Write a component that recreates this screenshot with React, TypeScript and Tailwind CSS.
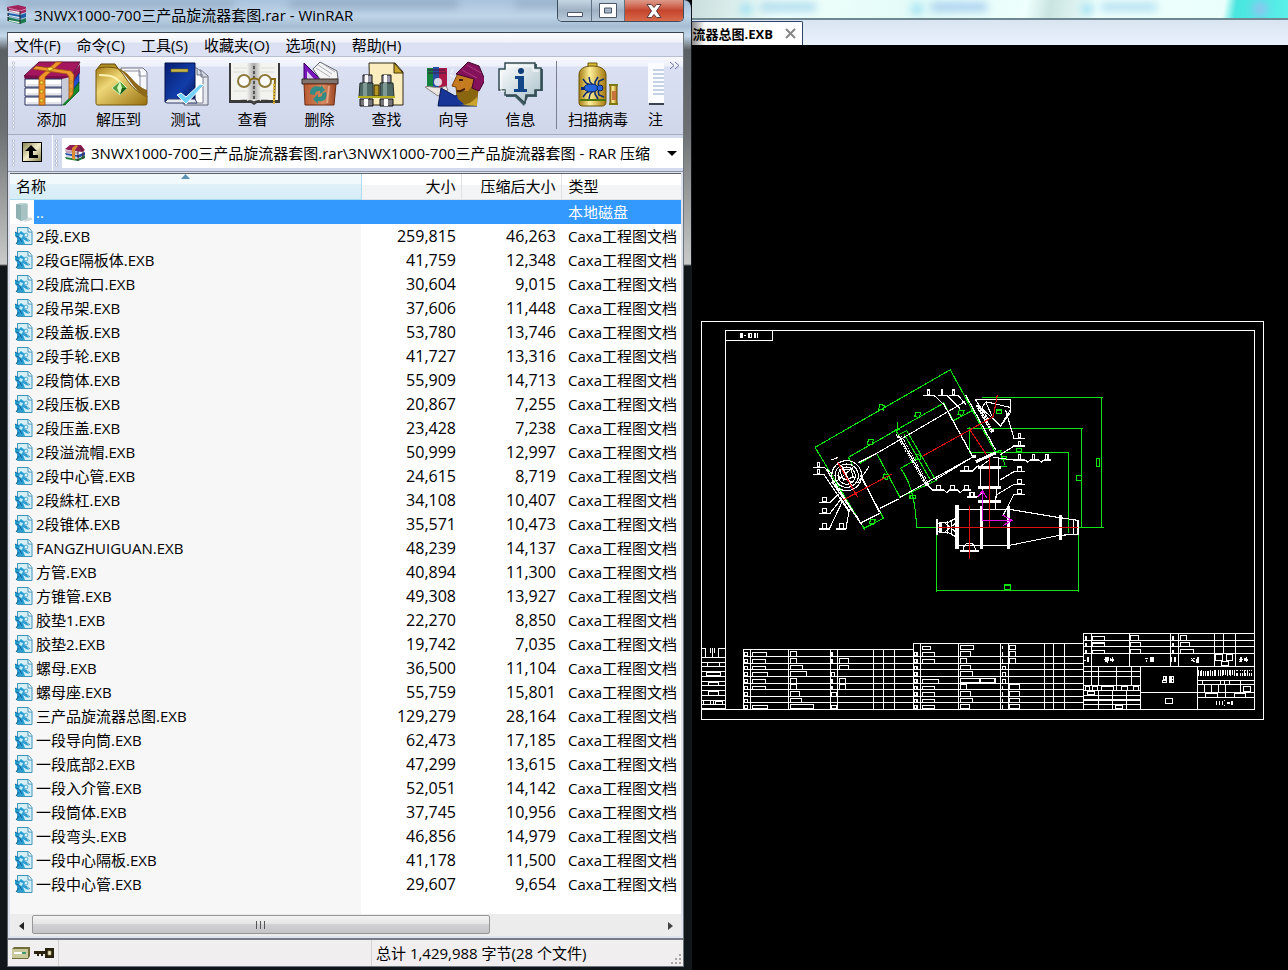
import type { ReactNode } from "react";

type FileRow = [name: string, size: string, packed: string];

const files: FileRow[] = [
  ["2段.EXB", "259,815", "46,263"],
  ["2段GE隔板体.EXB", "41,759", "12,348"],
  ["2段底流口.EXB", "30,604", "9,015"],
  ["2段吊架.EXB", "37,606", "11,448"],
  ["2段盖板.EXB", "53,780", "13,746"],
  ["2段手轮.EXB", "41,727", "13,316"],
  ["2段筒体.EXB", "55,909", "14,713"],
  ["2段压板.EXB", "20,867", "7,255"],
  ["2段压盖.EXB", "23,428", "7,238"],
  ["2段溢流帽.EXB", "50,999", "12,997"],
  ["2段中心管.EXB", "24,615", "8,719"],
  ["2段絑杠.EXB", "34,108", "10,407"],
  ["2段锥体.EXB", "35,571", "10,473"],
  ["FANGZHUIGUAN.EXB", "48,239", "14,137"],
  ["方管.EXB", "40,894", "11,300"],
  ["方锥管.EXB", "49,308", "13,927"],
  ["胶垫1.EXB", "22,270", "8,850"],
  ["胶垫2.EXB", "19,742", "7,035"],
  ["螺母.EXB", "36,500", "11,104"],
  ["螺母座.EXB", "55,759", "15,801"],
  ["三产品旋流器总图.EXB", "129,279", "28,164"],
  ["一段导向筒.EXB", "62,473", "17,185"],
  ["一段底部2.EXB", "47,299", "13,615"],
  ["一段入介管.EXB", "52,051", "14,142"],
  ["一段筒体.EXB", "37,745", "10,956"],
  ["一段弯头.EXB", "46,856", "14,979"],
  ["一段中心隔板.EXB", "41,178", "11,500"],
  ["一段中心管.EXB", "29,607", "9,654"],
];

const menus = ["文件(F)", "命令(C)", "工具(S)", "收藏夹(O)", "选项(N)", "帮助(H)"];

/* ── Icons ── */
function Books({ className }: { className: string }) {
  return (
    <svg viewBox="0 0 20 19" className={className} aria-hidden="true">
      <path d="M0 2 11 0l8 2v5l-6 2-12-3z" fill="#a3245c" />
      <path d="M1 3l12 3 6-2" stroke="#d985ab" fill="none" />
      <path d="M2 5l11 2v2L2 6z" fill="#eee" />
      <path d="M1 8l12 2 6-2v4l-6 2-12-3z" fill="#1d5fa8" />
      <path d="M2 10l11 2v1.500L2 11z" fill="#dde8f2" />
      <path d="M1 12l12 3 6-2v4l-6 2-12-3z" fill="#1c7b53" />
      <path d="M2 15l11 2v1.500L2 16z" fill="#e6f0e8" />
      <path d="M13 6v13M1 3v3M1 8v3M1 12v4" stroke="#222" strokeWidth="1" fill="none" />
    </svg>
  );
}

function BeltBooks({ className }: { className: string }) {
  return (
    <svg viewBox="0 0 20 16" className={className} aria-hidden="true">
      <path d="M0 4l5-4h11l4 5-3 2-14-2z" fill="#8d1d55" />
      <path d="M0 5l13 2v2L1 8z" fill="#c4a5b8" />
      <path d="M0 8l13 2 7-3v3l-7 3L1 10z" fill="#234fae" />
      <path d="M1 10l12 2v1L1 12z" fill="#cdd6ea" />
      <path d="M0 12l13 2 7-4v3l-7 3-12-2z" fill="#1d7a3c" />
      <path d="M7 3l4-3 2 1-3 4v10l-3-1z" fill="#d98a2e" />
      <path d="M13 6v10M15 2l3 4v8" stroke="#4b1f22" fill="none" />
    </svg>
  );
}

function AddIcon() {
  return (
    <>
      <path d="M2 15 17 1h41l-9 15z" fill="#a5165f" stroke="#5d0c38" />
      <path d="m2 15 1 4h38l10-3 7-13-9 12z" fill="#7d0e49" />
      <path d="M49 18 58 3v9l-9 15z" fill="#8c1151" />
      <path d="M48 26 57 12v10l-9 13z" fill="#1d4fd0" stroke="#0a1f66" strokeWidth=".6" />
      <path d="M43 40 57 21v9L43 44h-4z" fill="#158a2c" stroke="#06400f" strokeWidth=".6" />
      <path d="M3 18h37v8H3zM3 27h37v8H3zM3 36h37v8H3z" fill="#fff" stroke="#27305f" strokeWidth="1" />
      <path d="m40 18 8-2v8l-8 2zM40 27l9-5v7l-9 6zM40 36l8-7v7l-8 8z" fill="#c8cad8" />
      <path d="M5 24h34M5 33h34M5 42h34" stroke="#c9cbd8" strokeWidth="1" />
      <path d="M17 16 34 1h6L23 16v28h-6z" fill="#f0942b" stroke="#a14f08" strokeWidth=".8" />
      <path d="M14 5l35 5 3 4-1 19-4 5V16l-2-3L11 8z" fill="#ef9831" stroke="#9b500c" strokeWidth=".8" />
      <path d="m25 7 4-1 3 2-5 2zM18 20h3v3h-3zM18 29h3v3h-3zM18 38h3v3h-3zM48 20h2v2h-2zM48 28h2v2h-2z" fill="#ffe34c" stroke="#8d6508" strokeWidth=".6" />
    </>
  );
}

function ExtractIcon() {
  return (
    <>
      <path d="M8 8l4-5h14l4 6h26v34H9z" fill="#b28e26" stroke="#5d4708" />
      <path d="M32 7h22l4 4v25H34z" fill="#f5f6fb" stroke="#727585" />
      <path d="M35 10h16v24M50 8v7h7" fill="#fff" stroke="#8a8d9c" />
      <path d="M7 9c3-4 14-3 20-2 8 2 12 22 31 28v7c0 2-1 2-3 2H9c-2 0-2-1-2-3z" fill="url(#gold)" stroke="#705609" />
      <path d="M28 7c14 4 16 17 30 22v8C44 30 40 14 28 7z" fill="#8d6819" />
      <path d="M10 14c12 0 16 1 24 10" stroke="#fff4b0" strokeWidth="2" fill="none" />
      <path d="m31 20 7 7-7 7-8-7z" fill="#4d9a3a" stroke="#d9efb8" />
      <path d="m31 20 2 7-2 7-3-7z" fill="#d8f7bc" />
      <path d="m33 27 5 0-7 7z" fill="#185b13" />
    </>
  );
}

function TestIcon() {
  return (
    <>
      <path d="M31 9h14l7 6v29H28z" fill="#e5e7ef" stroke="#5d6272" />
      <path d="M28 7h13l6 6v29H26z" fill="#fff" stroke="#7a7f91" />
      <path d="M41 7v7h6M45 9v7h6" fill="#d7dbe7" stroke="#6b7080" />
      <path d="M9 2h30v39H9z" fill="url(#navy)" stroke="#031048" />
      <path d="m9 41 3-3h27l2 4H11z" fill="#e8ebf4" stroke="#333c66" />
      <path d="M15 8h17v3H15z" fill="#cab84d" stroke="#6b5e13" strokeWidth=".6" />
      <path d="m21 34 9 9 18-19-4-1-14 13-5-4z" fill="#73d3ff" stroke="#fff" />
    </>
  );
}

function ViewIcon() {
  return (
    <>
      <path d="M6 2h51v40H34l-3 2-3-2H6z" fill="#3a3a3a" />
      <path d="M8 2h23v38c-5-2-10-1-23-1zM31 2h24v37c-13 0-18-1-24 1z" fill="#f3f3ef" />
      <path d="M24 2h14v38c-3-2-10-2-14 0z" fill="url(#spine)" />
      <path d="M31 5v37" stroke="#555" strokeWidth="2" strokeDasharray="3 2" />
      <path d="M10 7h14M10 11h12M10 30h14M38 7h14M38 11h13M38 30h14" stroke="#dcdcd8" />
      <circle cx="21" cy="20" r="6" fill="#ffffffaa" stroke="#8d7a3c" strokeWidth="2" />
      <circle cx="42" cy="20" r="6" fill="#ffffffaa" stroke="#8d7a3c" strokeWidth="2" />
      <path d="M27 19c3-2 6-2 9 0M48 18h4l-1 24" stroke="#8a6914" strokeWidth="2" fill="none" />
      <path d="M51 23v20" stroke="#d9b436" strokeDasharray="2 1" strokeWidth="2" />
    </>
  );
}

function DeleteIcon() {
  return (
    <>
      <path d="M14 2 34 22H14z" fill="#7a14bb" stroke="#350064" />
      <path d="M17 10 25 19h-8z" fill="#dcd0ef" />
      <path d="m23 8 7-7 17 9 1 8-16 3z" fill="#f5f5f6" stroke="#65656d" />
      <path d="m28 4 14 9M26 7l14 9M33 3l12 8" stroke="#aeaeb8" />
      <path d="M12 18h36v5H12z" fill="#81766f" stroke="#322823" />
      <path d="M14 23h32l-2 21H15z" fill="url(#copper)" stroke="#6d2c12" />
      <path d="M20 33c0-7 5-9 11-7v-2l4 5-5 4v-3c-4 0-5 1-5 4zM36 31c2 7-2 10-8 9v3l-5-5 5-5v3c3 0 5-1 4-4z" fill="#338b85" />
      <path d="m39 25-2 17" stroke="#e5a381" strokeWidth="2" />
    </>
  );
}

function FindIcon() {
  return (
    <>
      <path d="M12 2h26l8 9v33H13z" fill="#fbedbd" stroke="#312b17" />
      <path d="M37 2v10h9z" fill="#c9a62a" stroke="#413408" />
      <path d="M6 14h9v8H6zM25 14h9v8h-9z" fill="#99a" stroke="#111" />
      <path d="M8 14h3v8H8zM27 14h3v8h-3z" fill="#fff" />
      <path d="M3 22h13v14H2zM23 22h13l1 14H23z" fill="#4e6864" stroke="#222b2a" />
      <path d="M6 22h4v14H6zM26 22h4v14h-4z" fill="#7f9a95" />
      <path d="M17 24h5v11h-5z" fill="#b49422" stroke="#262305" />
      <path d="M1 36h37" stroke="#b5ad20" strokeWidth="2" />
      <path d="M3 38h13v7H3zM23 38h13v7H23z" fill="#77777c" stroke="#111" />
      <path d="M7 38h4v7H7zM27 38h4v7h-4z" fill="#fff" />
    </>
  );
}

function WizardIcon() {
  return (
    <>
      <path d="M3 7h6v19H3z" fill="#14813e" />
      <path d="M9 6h6v20H9z" fill="#274b9f" />
      <path d="M15 7h8v20h-8z" fill="#a91846" />
      <path d="M4 9h17M4 12h18" stroke="#3a1d48" />
      <circle cx="14" cy="21" r="4" fill="#fff" opacity=".8" />
      <path d="M1 26c5-2 12 3 21-1l2 4-10 6z" fill="#ece6e3" stroke="#8b807c" />
      <path d="M14 45l3-18 14 8 8-3 14 13z" fill="#173596" stroke="#091853" />
      <path d="M34 12c-2 5-4 8-6 13l4 1 1 8 12 3 9-13-7-13z" fill="#c57b20" stroke="#774008" />
      <path d="M32 30l12 0 8-10 3 3-2 21H41l-7-6z" fill="#8a6510" />
      <path d="M36 44c8 0 12-3 17-8v9z" fill="#c9a52c" />
      <path d="M32 13 44 1l11 4 6 14-6 11-7-3 2-9z" fill="#84125b" stroke="#43052d" />
      <path d="m38 9 15 8M43 4l14 8" stroke="#ad397f" />
      <path d="M33 30c5 1 6-2 8-2M35 19h4" stroke="#432009" strokeWidth="2" />
      <path d="m26 14 4 2M29 8l-2 4" stroke="#fff" />
    </>
  );
}

function InfoIcon() {
  return (
    <>
      <path d="M15 3h31v5h6v22h-6v6H37l-4 9-9-9h-9v-6H9V9h6z" fill="#405e65" />
      <path d="M14 2h30v5h6v22h-6v5H35l-1 8-9-8H14v-5H8V8h6z" fill="url(#silver)" stroke="#334b51" strokeWidth="1.500" />
      <path d="M15 5h27v5h6M14 30h-4V10" stroke="#fff" fill="none" />
      <circle cx="30" cy="10" r="3" fill="#123c79" />
      <path d="M24 15h9v13h3v3H23v-3h4V18h-3z" fill="#134687" />
    </>
  );
}

function ScanIcon() {
  return (
    <>
      <path d="M20 2h9v5h-9z" fill="#d9ba33" stroke="#6b570b" />
      <path d="M11 14c0-6 5-9 13-9s14 3 14 9v27c0 3-2 4-4 4H15c-3 0-4-1-4-4z" fill="url(#barrel)" stroke="#69550b" />
      <path d="M12 39h26" stroke="#4f750d" strokeWidth="2" />
      <path d="m15 18 3 4 4 2M21 16l1 5 3 3M30 16l-3 5v3M36 18l-5 2-1 4M15 36l3-4 4-2M21 38l1-5 3-3M30 38l-3-5v-3M36 36l-5-2-1-4" stroke="#0b2a70" fill="none" strokeWidth="1.500" />
      <path d="M13 26h5v3h-5z" fill="#0b2a70" />
      <ellipse cx="23" cy="27" rx="7" ry="4" fill="#2565dc" stroke="#072160" />
      <circle cx="32" cy="27" r="3" fill="#2565dc" stroke="#072160" />
      <path d="M42 24h7v19h-7z" fill="url(#barrel)" stroke="#69550b" />
      <path d="M41 24h9M41 43h9" stroke="#7b7913" strokeWidth="2" />
      <path d="M44 30h4v9h-4z" fill="#c9743f" />
    </>
  );
}

function FileIcon() {
  return (
    <svg viewBox="0 0 18 18" className="h-[18px] w-[18px]" aria-hidden="true">
      <path d="M2.500.500h11l3.500 4v13H2.500z" fill="#d5f0fa" stroke="#3f91b8" />
      <path d="M13 1v4h4" fill="#fff" stroke="#3f91b8" />
      <path d="M0 5l4 1 2-2 4 3-1 2 3 3 2 3-3-1-3-2 2 5H1l2-5-3-3z" fill="#2a9fd4" />
      <path d="M0 5l3 2M1 9l3 1 3 5M1 17l3-4" stroke="#135f92" fill="none" />
      <path d="M5 7l3 1-1 3-3-1z" fill="#bdeafa" />
      <circle cx="11" cy="8" r="2" fill="none" stroke="#58a9cc" />
      <path d="M11 11l4 3" stroke="#3b8fb9" />
    </svg>
  );
}

function IconDefs() {
  return (
    <svg className="absolute h-0 w-0" aria-hidden="true">
      <defs>
        <linearGradient id="gold" x2="1" y2="1">
          <stop stopColor="#a97f16" />
          <stop offset=".35" stopColor="#eed778" />
          <stop offset="1" stopColor="#98700d" />
        </linearGradient>
        <linearGradient id="navy" x2="1" y2="1">
          <stop stopColor="#061e72" />
          <stop offset=".6" stopColor="#123eaa" />
          <stop offset="1" stopColor="#041452" />
        </linearGradient>
        <linearGradient id="spine">
          <stop stopColor="#f1f1ee" />
          <stop offset=".5" stopColor="#aaa" />
          <stop offset="1" stopColor="#f1f1ee" />
        </linearGradient>
        <linearGradient id="copper">
          <stop stopColor="#b75a32" />
          <stop offset=".6" stopColor="#d68a61" />
          <stop offset="1" stopColor="#9b4421" />
        </linearGradient>
        <linearGradient id="silver" x2="1" y2="1">
          <stop stopColor="#fff" />
          <stop offset="1" stopColor="#a7bfc9" />
        </linearGradient>
        <linearGradient id="barrel">
          <stop stopColor="#a47c12" />
          <stop offset=".4" stopColor="#fff099" />
          <stop offset="1" stopColor="#a5770b" />
        </linearGradient>
      </defs>
    </svg>
  );
}

const tools: { label: string; icon: ReactNode }[] = [
  { label: "添加", icon: <AddIcon /> },
  { label: "解压到", icon: <ExtractIcon /> },
  { label: "测试", icon: <TestIcon /> },
  { label: "查看", icon: <ViewIcon /> },
  { label: "删除", icon: <DeleteIcon /> },
  { label: "查找", icon: <FindIcon /> },
  { label: "向导", icon: <WizardIcon /> },
  { label: "信息", icon: <InfoIcon /> },
];

function ToolButton({ label, children, wide }: { label: string; children: ReactNode; wide?: boolean }) {
  return (
    <button type="button" className={`flex shrink-0 flex-col items-center ${wide ? "w-20" : "w-[67px]"}`}>
      <svg viewBox="0 0 60 46" className="h-[46px] w-[60px]" aria-hidden="true">
        {children}
      </svg>
      <span className="leading-6">{label}</span>
    </button>
  );
}

function Grip() {
  return (
    <div className="my-1 w-[3px] shrink-0 bg-[radial-gradient(circle,#ffffff_1px,#b4bace_1px,transparent_2px)] bg-[length:3px_4px]" />
  );
}

/* ── Window parts ── */
function TitleBar() {
  return (
    <header className="relative flex h-8 items-start justify-between">
      {/* what shows through the glass */}
      <div className="absolute inset-x-0 top-0 flex h-3 justify-between opacity-50 blur-xs" aria-hidden="true">
        <i className="h-2 w-1/3 bg-[#8199b1]" />
        <i className="h-2 w-1/4 bg-[#7690aa]" />
        <i className="h-2 w-1/4 bg-[#8199b1]" />
      </div>
      <div className="relative flex min-w-0 items-center gap-[7px] pt-1">
        <Books className="h-[21px] w-5 shrink-0" />
        <h1 className="truncate leading-5">3NWX1000-700三产品旋流器套图.rar - WinRAR</h1>
      </div>
      <div className="relative flex h-[22px] shrink-0 overflow-hidden rounded-b-[5px] border border-t-0 border-[#3e4c5c]">
        <button type="button" aria-label="最小化" className="flex w-[34px] items-end justify-center border-r border-[#5f7184] bg-linear-to-b from-[#c5d5e3] via-[#9fb2c4] to-[#b9cbdb] pb-1">
          <svg viewBox="0 0 16 5" className="h-[5px] w-4" aria-hidden="true">
            <path d="M.5.500h15v4H.5z" fill="#fff" stroke="#4c5867" />
          </svg>
        </button>
        <button type="button" aria-label="最大化" className="flex w-[33px] items-center justify-center border-r border-[#5f7184] bg-linear-to-b from-[#c5d5e3] via-[#9fb2c4] to-[#b9cbdb]">
          <svg viewBox="0 0 18 15" className="h-[15px] w-[18px]" aria-hidden="true">
            <path d="M.5.500h17v14H.5zM5.500 5h7v5h-7z" fill="#fff" fillRule="evenodd" stroke="#4c5867" />
          </svg>
        </button>
        <button type="button" aria-label="关闭" className="flex w-[58px] items-center justify-center bg-linear-to-b from-[#dd9a8b] via-[#c4442c] to-[#d9694b]">
          <svg viewBox="0 0 16 14" className="h-[14px] w-4" aria-hidden="true">
            <path d="M1 .5h4.500L8 3.500l2.500-3H15L10.500 7l4.500 6.500h-4.500L8 10.500l-2.500 3H1L5.500 7z" fill="#fff" stroke="#5b3a3e" />
          </svg>
        </button>
      </div>
    </header>
  );
}

function Toolbar() {
  return (
    <div className="flex h-[78px] border-b border-[#a3abc0] bg-[linear-gradient(#f8f9fe_0px,#eef1fb_9px,#dbe1f3_10px,#cfd6ea_100%)] pl-1">
      <Grip />
      <div className="flex min-w-0 flex-1 overflow-hidden pt-1 pl-[3px]">
        {tools.map((t) => (
          <ToolButton key={t.label} label={t.label}>
            {t.icon}
          </ToolButton>
        ))}
        <div className="mr-px ml-[2px] h-[68px] w-px shrink-0 bg-[#7a8090]" />
        <ToolButton label="扫描病毒" wide>
          <ScanIcon />
        </ToolButton>
        <button type="button" aria-label="注释" className="ml-[10px] flex min-w-0 flex-1 flex-col items-start overflow-hidden">
          <svg viewBox="0 0 16 46" className="h-[46px] w-4 shrink-0" aria-hidden="true">
            <path d="M0 2h16v40H0z" fill="#fbfcff" />
            <path d="M1 43h15" stroke="#3d4250" strokeWidth="2" />
            <path d="M5 9h11M5 13h11M5 17h11M5 21h11M5 25h11M5 29h11M5 33h11" stroke="#8fa6c9" />
          </svg>
          <span className="leading-6">注</span>
        </button>
      </div>
      <button type="button" aria-label="更多" className="flex w-[18px] shrink-0 items-start justify-center pt-1">
        <svg viewBox="0 0 11 9" className="h-[9px] w-[11px]" fill="none" stroke="#6f74a5" aria-hidden="true">
          <path d="m1 1 4 3.500L1 8M6 1l4 3.500L6 8" />
        </svg>
      </button>
    </div>
  );
}

function AddressBar() {
  return (
    <div className="flex h-[37px] border-b border-[#8d94a6] bg-[#d5dbee] pl-1">
      <Grip />
      <button type="button" aria-label="上一级" className="mt-[7px] ml-[7px] h-5 w-5 shrink-0 border border-black bg-linear-to-br from-[#8a8550] via-[#f2eecb] to-[#8a8550]">
        <svg viewBox="0 0 18 18" aria-hidden="true">
          <path d="m8 2 6 6h-4v4h5v3H6V8H2z" fill="#000" />
        </svg>
      </button>
      <div className="ml-2.5 w-px shrink-0 bg-white" />
      <div className="ml-[2px] flex">
        <Grip />
      </div>
      <label className="my-[3px] ml-1 flex min-w-0 flex-1 items-center bg-white pl-[3px]">
        <BeltBooks className="h-4 w-5 shrink-0" />
        <select aria-label="地址" className="ml-[6px] min-w-0 flex-1 appearance-none overflow-hidden bg-transparent whitespace-nowrap outline-none">
          <option>3NWX1000-700三产品旋流器套图.rar\3NWX1000-700三产品旋流器套图 - RAR 压缩</option>
        </select>
        <svg viewBox="0 0 10 5" className="mr-1.5 ml-2 h-[5px] w-2.5 shrink-0" aria-hidden="true">
          <path d="M0 0h10L5 5z" />
        </svg>
      </label>
    </div>
  );
}

function FileTable() {
  return (
    <table className="w-full table-fixed border-collapse">
      <colgroup>
        <col />
        <col className="w-[100px]" />
        <col className="w-[100px]" />
        <col className="w-[120px]" />
      </colgroup>
      <thead>
        <tr className="h-[25px] bg-[linear-gradient(#fff_45%,#f3f4f5_45%)] text-right">
          <th className="relative border-r border-b border-[#a9dcec] bg-[linear-gradient(#f2f9fd_40%,#dff0f8_42%,#d6edf7)] p-0 pl-1.5 text-left font-normal">
            名称
            <svg viewBox="0 0 9 5" className="absolute inset-x-0 top-0 mx-auto h-[5px] w-[9px]" aria-hidden="true">
              <path d="M0 5 4.500 0 9 5z" fill="#5c93b5" />
            </svg>
          </th>
          <th className="border-r border-b border-[#e0e3e6] p-0 pr-[5px] font-normal">大小</th>
          <th className="border-r border-b border-[#e0e3e6] p-0 pr-[5px] font-normal">压缩后大小</th>
          <th className="border-b border-[#e0e3e6] p-0 pl-[7px] text-left font-normal">类型</th>
        </tr>
      </thead>
      <tbody>
        <tr className="h-6 bg-[#3399ff] text-white">
          <td className="p-0">
            <div className="flex h-6 leading-6">
              <span className="flex w-6 items-center bg-white pl-[5px]">
                <svg viewBox="0 0 18 20" className="h-5 w-[18px]" aria-hidden="true">
                  <path d="M11 15l6 1v2l-8 2z" fill="#d3d8d9" />
                  <path d="M1 2l5-1h5l2 1v15l-6 2-6-3z" fill="#bfd3d3" />
                  <path d="M1 2l5 1v16l-5-3z" fill="#8fb0b1" />
                  <path d="M6 3l6-1v15l-6 2z" fill="#a6c2c3" />
                </svg>
              </span>
              <span className="pl-[2px]">..</span>
            </div>
          </td>
          <td />
          <td />
          <td className="p-0 pl-[7px]">本地磁盘</td>
        </tr>
        {files.map(([name, size, packed]) => (
          <tr key={name} className="h-6 leading-6 whitespace-nowrap">
            <td className="overflow-hidden p-0">
              <div className="flex h-6">
                <span className="flex w-6 shrink-0 items-center pl-[5px]">
                  <FileIcon />
                </span>
                <span className="truncate pl-[2px]">{name}</span>
              </div>
            </td>
            <td className="p-0 pr-[5px] text-right text-base leading-6">{size}</td>
            <td className="p-0 pr-[5px] text-right text-base leading-6">{packed}</td>
            <td className="overflow-hidden p-0 pl-[7px]">Caxa工程图文档</td>
          </tr>
        ))}
      </tbody>
    </table>
  );
}

function ScrollBar() {
  return (
    <div className="flex h-[22px] bg-[#ececed] pt-px">
      <button type="button" aria-label="向左滚动" className="flex w-[22px] items-center justify-center">
        <svg viewBox="0 0 5 8" className="h-2 w-[5px]" aria-hidden="true">
          <path d="M5 0v8L0 4z" fill="#222" />
        </svg>
      </button>
      <div className="flex-1">
        <div className="flex h-[19px] w-[73%] items-center justify-center gap-[3px] rounded-xs border border-[#979797] bg-[linear-gradient(#f3f3f3,#e5e5e6_45%,#d2d2d4_50%,#c4c4c6)]">
          <i className="h-2 w-px bg-[#555]" />
          <i className="h-2 w-px bg-[#555]" />
          <i className="h-2 w-px bg-[#555]" />
        </div>
      </div>
      <button type="button" aria-label="向右滚动" className="flex w-[22px] items-center justify-center">
        <svg viewBox="0 0 5 8" className="h-2 w-[5px]" aria-hidden="true">
          <path d="M0 0v8l5-4z" fill="#444" />
        </svg>
      </button>
    </div>
  );
}

function StatusBar() {
  return (
    <footer className="flex h-[26px] items-stretch bg-[#f0eeee]">
      <div className="flex w-[51px] items-center gap-[3px] border-r border-[#d7d2d2] pl-[3px]">
        <svg viewBox="0 0 20 12" className="h-3 w-5" aria-hidden="true">
          <path d="M1 2l2-2h16v9l-2 3H1z" fill="#716d3b" />
          <path d="M1 2h16v9H1z" fill="#c9c99c" />
          <path d="M3 6h12" stroke="#fff" strokeWidth="2" />
          <path d="M11 6h4" stroke="#3f9a72" strokeWidth="2" />
        </svg>
        <svg viewBox="0 0 20 12" className="h-3 w-5" aria-hidden="true">
          <path d="M0 4h11V1h9v10h-9V7H9v2H7V7H5v2H3V7H0z" fill="#29220e" />
          <path d="M14 4h3v4h-3z" fill="#f0ecc8" stroke="#a59961" strokeWidth=".7" />
        </svg>
      </div>
      <div className="flex-1" />
      <div className="flex w-[312px] items-end justify-between border-l border-[#d7d2d2] pl-1">
        <span className="self-center">总计 1,429,988 字节(28 个文件)</span>
        <svg viewBox="0 0 12 12" className="h-3 w-3" fill="#aaa6a6" aria-hidden="true">
          <path d="M8 0h2v2H8zM8 4h2v2H8zM8 8h2v2H8zM4 4h2v2H4zM4 8h2v2H4zM0 8h2v2H0z" />
        </svg>
      </div>
    </footer>
  );
}

function WinRar() {
  return (
    <section className="flex min-w-0 flex-col rounded-tr-lg border-r border-[#15191e] bg-[linear-gradient(#a9c3dc_0px,#c0d5e9_16px,#a5bdd2_26px,#c3d8ea_36px,#5b6064_50px,#6d7072_130px,#c9cac9_264px,#11161b_266px)] pr-[7px] pb-[3px] pl-[7px]">
      <TitleBar />
      <div className="flex flex-1 flex-col border border-t-[#39434f] border-r-[#6f757c] border-b-[#6f757c] border-l-[#5c6168] bg-[#dfe3ef]">
        <nav className="flex h-6 items-center gap-4 border-b border-[#b8bfd0] bg-[linear-gradient(#fdfdff_0px,#f1f3fb_9px,#dbe1f2_10px,#dce2f3_100%)] pl-1.5">
          {menus.map((m) => (
            <button type="button" key={m} className="whitespace-nowrap">
              {m}
            </button>
          ))}
        </nav>
        <Toolbar />
        <AddressBar />
        <main className="mx-[2px] mt-px flex flex-1 flex-col border-t border-[#5f6368] bg-[linear-gradient(to_left,#fff_320px,#f7f7f7_320px)]">
          <FileTable />
          <div className="min-h-4 flex-1" />
          <ScrollBar />
        </main>
        <div className="mt-[2px] h-[2px] bg-[#777c86]" />
        <StatusBar />
      </div>
    </section>
  );
}

/* ── Drawing ── */
const RULE_YS = [118, 139, 160, 178, 199, 220, 238, 259, 277];

// small field boxes in the parts list: x, y, width, height
const FIELDS_LEFT = [
  [172, 127, 43, 12], [172, 148, 40, 12], [172, 169, 40, 9], [172, 187, 46, 12], [172, 208, 40, 12], [172, 229, 40, 9], [172, 286, 46, 11],
  [286, 124, 19, 15], [286, 145, 19, 15], [286, 166, 37, 12], [286, 184, 49, 15], [286, 205, 19, 15], [286, 223, 19, 15], [286, 244, 28, 15], [286, 265, 34, 12], [286, 283, 70, 14],
  [433, 145, 28, 15], [433, 166, 28, 12], [433, 205, 19, 15], [433, 223, 19, 15],
  [682, 109, 25, 9], [682, 127, 37, 12], [682, 148, 37, 12], [682, 208, 49, 12], [682, 229, 37, 9], [682, 247, 37, 12], [682, 268, 37, 9], [682, 286, 37, 11],
  [796, 106, 40, 12], [796, 124, 31, 15], [796, 145, 19, 15], [796, 166, 31, 12], [796, 184, 37, 15], [796, 205, 104, 14], [796, 223, 19, 15], [796, 244, 31, 15], [796, 265, 37, 12], [796, 283, 28, 14],
  [855, 205, 44, 14], [943, 106, 19, 12], [943, 124, 19, 15], [943, 145, 19, 15], [943, 223, 31, 15], [943, 244, 31, 15], [943, 265, 31, 12], [943, 283, 31, 14],
  [922, 169, 10, 9], [922, 187, 10, 12], [922, 208, 10, 12], [410, 187, 9, 12], [410, 247, 15, 12], [410, 286, 15, 11],
  [34, 187, 43, 9], [40, 217, 31, 9], [40, 244, 31, 12], [62, 274, 21, 9],
];
const FIELDS_RIGHT = [
  [336, 79, 38, 13], [336, 99, 38, 11], [336, 121, 38, 9], [451, 76, 25, 16], [451, 97, 31, 13], [451, 118, 31, 12],
  [601, 76, 19, 16], [601, 97, 28, 13], [601, 118, 40, 12],
  [706, 133, 22, 18], [739, 133, 19, 18], [724, 154, 22, 12],
  [316, 229, 13, 12], [337, 229, 16, 12], [364, 229, 37, 12], [424, 229, 19, 12], [460, 229, 16, 12],
  [322, 244, 22, 11], [406, 286, 22, 11], [556, 265, 22, 16],
  [790, 229, 22, 16], [676, 250, 36, 12], [763, 250, 34, 12],
];

function Fields({ boxes }: { boxes: number[][] }) {
  return <path d={boxes.map(([x, y, w, h]) => `M${x} ${y}h${w}v${h}h-${w}z`).join("")} />;
}

function CadDrawing() {
  const rowBoxes = RULE_YS.map((y) => [148, y + 9, 9, 10]).concat(RULE_YS.map((y) => [658, y + 9, 8, 10]));
  return (
    <svg viewBox="692 45 596 925" className="min-h-0 w-full flex-1" role="img" aria-label="三产品旋流器总图" fill="none" strokeWidth="3.300" shapeRendering="crispEdges">
      <g stroke="#fff" strokeWidth="1">
        <path d="M701.500 321.500h562v398h-562zM725.500 330.500h529v379h-529zM725.500 340.500h47v-10" />
        <path d="M740 335h3M748 335h2M754 335h2M757 335h1" strokeWidth="5" />
        <path d="M744 335h2M748 333h3v4h-3" />
      </g>

      {/* parts list, left half */}
      <g transform="translate(695 610) scale(.3333)" stroke="#fff">
        <path d="M145 118h510M655 100h510M145 139h1020M145 160h1020M145 178h1020M145 199h1020M145 220h1020M145 238h1020M145 259h1020M145 277h1020" />
        <path d="M145 118v179M166 118v179M280 118v179M407 118v179M427 118v179M535 118v179M565 118v179M598 118v179" />
        <path d="M655 100v197M677 100v197M790 100v197M917 100v197M941 100v197M1048 100v197M1075 100v197M1108 100v197" />
        <path d="M19 142h72M19 157h72M19 169h72M19 184h72M19 199h72M19 214h72M19 226h72M19 241h72M19 256h72M19 271h72M19 283h72M19 297h72M19 115h13v27M70 142v-27h21M46 115v14M52 115v27M58 115v14M37 157v12M73 157v12M25 271v12M46 271v12M55 271v12" />
        <path d="M411 125v12M411 146v12M411 206v12M411 227v10" strokeWidth="6" />
        <path d="M922 109v8M922 127v10M922 148v10M922 229v8M922 247v10M922 268v8M922 286v10" />
        <Fields boxes={FIELDS_LEFT} />
        <Fields boxes={rowBoxes} />
      </g>

      {/* title block */}
      <g transform="translate(980 610) scale(.3333)" stroke="#fff">
        <path d="M310 297V71h513M310 92h513M310 110h513M310 130h513M310 169h513M334 71v98M448 71v98M572 71v98M595 71v98M703 71v98M730 71v61M766 71v98" />
        <path d="M310 184h171M310 199h171M310 226h171M310 241h171M310 256h171M310 270h171M310 283h171M334 169v57M355 169v57M410 169v72M454 169v57M355 241v56M397 241v56M439 241v56" />
        <path d="M481 169v128M652 169v128M481 247h342M652 211h171M652 223h171M652 262h171M667 211v12M721 211v12M733 211v12M748 211v12M781 211v12M673 223v24M694 223v24M715 223v24M736 223v39M781 223v24" />
        <path d="M318 78v11M318 99v9M318 120v8M578 78v11M578 99v9M578 120v8" strokeWidth="6" />
        {/* column captions, too small to resolve */}
        <path d="M312 151h6M324 142v14M376 142v14M376 144h8v6h-8l8 7M391 150h10M397 142v14M392 144v10M496 146h9M500 150v6M512 142h8v12h-8zM516 142v14M575 142v14M585 142v14M581 148h7M633 144l10 12M643 144l-10 8M648 150h10M654 142v14M649 156h8M778 148h10M783 142v14M778 155h9M795 144v6h8M799 142v14" />
        <path d="M550 200h8v8h-8zM547 211h13v6h-13zM570 200h10v18h-10zM575 200v18M570 209h10" />
        <path d="M653 189h164" strokeWidth="18" strokeDasharray="3 3 6 4 3 3" />
        <path d="M656 181h50M730 196h30M768 186h49" stroke="#000" strokeDasharray="8 5" />
        <path d="M709 272v14M718 272v14M727 272v14M731 272h4M731 286h4M756 272v14M740 279h9" />
        <Fields boxes={FIELDS_RIGHT} />
      </g>

      {/* assembly */}
      <g transform="translate(800 360) scale(.3333)">
        <g stroke="#10e410">
          <path d="M45 262 450 30M45 262 195 510M450 28 585 275M145 292 430 130M145 292l12 22M430 127l30 55 60-32M285 207l14 24M293 185v27M275 215l26-8M295 225l25-13 88 150-28 13M312 222l84 146M180 310l50-30 70 132 108-50M302 325l43-25M302 325c35 50 44 105 48 177h58M192 505l58-30-10-20" />
          <path d="M409 478v219M835 520v177M409 691h426M547 112h363M905 112v390M835 502h76M502 205h348M844 205v297M508 200v77h297v243M575 280l30-10M600 270l15 45M592 320h30" />
          <path d="M240 134l14 2-4 14-14-2zM348 156l14 2-4 14-14-2zM206 238l14 2-4 14-14-2zM478 150l14 2-4 14-14-2zM350 284l14 2-4 14-14-2zM252 342l14 2-4 14-14-2zM212 477l14 2-4 14-14-2zM590 150h15v10h-15zM649 265h15v10h-15zM605 289h15v10h-15zM330 406h16v10h-16zM829 346h15v15h-15zM889 295h10v24h-10zM613 675h18v13h-18z" />
        </g>
        <g stroke="#fff">
          {/* inclined cylinder */}
          <path d="M175 308l55-28M230 280l265-155M240 445l55-28M300 412l220-122M405 360l115-70M180 490l60-30M80 330l105 165M180 345l62 115" />
          <path d="M295 225 382 375M430 130l88 160M497 105l90 165M183 345l55 112M95 365l90 128" strokeWidth="4" />
          <path d="M532 135l45 82" strokeWidth="10" strokeDasharray="6 2" />
          <path d="M105 375l80 115M288 222l88 152M304 228l84 148" strokeDasharray="5 3" />
          <path d="M515 289h12M528 305l60-27M572 213h10M374 373h12" strokeWidth="9" />
          <path d="M118 410l30 45" strokeWidth="6" />
          {/* end flange */}
          <circle cx="140" cy="347" r="45" />
          <circle cx="140" cy="347" r="35" />
          <circle cx="140" cy="347" r="26" />
          <path d="M118 330l12 30 30-8-8-25zM112 362l48-40M125 318l30 60M115 350l40 15M172 370l35-50M95 300l20-8" />
          {/* elbow */}
          <path d="M525 118h107v38l-30 42-22-22M632 118v30M557 125l72 17M557 125l-14 24M557 125l22 50M545 145l57 52M632 148l-30 50M527 120l40 60" />
          {/* vertical pipe */}
          <path d="M542 322v60M596 322v60M547 382v60M590 382l-4 60M568 300l-30 22M596 290v30" />
          <path d="M534 322h68M534 382h68M534 424h68" strokeWidth="9" />
          {/* horizontal body */}
          <path d="M472 448h155l152 25 55 8v42l-55 3-150 30H472zM820 481v42M586 424v24M415 490l30-3 22-12M415 515l30 3 22 12M425 487v30M442 484v38M455 482v40M490 570c0-28 36-28 36 0" />
          <path d="M466 438h10v128h-10z" />
          <path d="M412 478v48M420 485v34M471 440v125M480 573h56" strokeWidth="6" />
          <path d="M545 438v128M625 438v128M782 465v75" strokeWidth="9" />
          <path d="M436 490l30 25M436 515l30-25" />
          {/* callouts */}
          <path d="M370 106h32l30 28M414 106h26l40 40M448 106h26l25 30M640 235h35M642 235l-25-85M640 258h35M642 258l-42 27M640 300h35l8 6 8-6h25l8 6 8-6h22M640 300l-60-8M640 335h35M642 335l-42 25M640 373h35M642 373l-55 33M640 403h35M642 403l-32 62M480 333h37l20-18M382 375l15 15h35l8 8 8-8h25l8 8 8-8h25M500 411h30l15-10" />
          <path d="M40 322h32l25 20M40 343h32l50 75M58 427h32l30-28M58 460h32l35-45M58 507h30l40-85M108 507h30l10-60" />
          <path d="M382 90h7v14h-7zM426 88v16M457 90h7v14h-7zM655 220h7v14h-7zM655 244h7v14h-7zM655 284h7v15h-7zM697 284h7v15h-7zM737 284h7v15h-7zM652 321h13v13h-13zM652 359h13v13h-13zM652 389h13v13h-13zM494 319h12v13h-12zM410 377h12v12h-12zM451 377h12v12h-12zM493 377h12v12h-12zM510 398h12v12h-12zM53 308h6v13h-6zM53 329h6v13h-6zM67 413h12v13h-12zM67 446h12v13h-12zM67 491h12v14h-12zM118 491h12v14h-12z" />
        </g>
        {/* centre lines */}
        <path d="m365 290 135-75 80-45 12-65M510 210l50 75M568 290v212M508 438v160M415 502h420M130 420l145-78M112 305l60 105" stroke="#e01010" />
        <path d="M547 395v86h88M533 412l14-20 15 23M608 465l28 16-28 16" stroke="#e010e0" />
      </g>
    </svg>
  );
}

function CadWindow() {
  return (
    <section className="flex min-w-0 flex-col bg-black">
      <div className="flex h-5 items-center justify-between overflow-hidden border-b-2 border-[#6e8791] bg-[linear-gradient(100deg,#c9dedd,#effffb_15%,#e2fbf8_40%,#eefffd_56%,#c9e4e2_60%,#effffd_68%,#eafffc_89%,#49e5df_91%,#5bf0ea)] pr-5 pl-12">
        {["bg-[#a9d8ee]", "bg-[#a3cbee]", "bg-[#b0def0]"].map((tone) => (
          <span key={tone} className="flex gap-2 blur-xs" aria-hidden="true">
            <i className="h-3 w-3 rounded-full bg-[#9fe0f2]" />
            <i className={`h-2 w-14 ${tone}`} />
          </span>
        ))}
        <i className="h-4 w-4 rounded-full bg-[#8fc4f0] blur-xs" />
      </div>
      <div className="flex h-[25px] items-end bg-linear-to-b from-[#d9e4f1] to-[#eaf2fc]">
        <div className="flex h-6 w-[111px] items-center justify-end gap-3 overflow-hidden rounded-tr-xs border-t border-r border-[#2d4468] bg-white bg-linear-to-r from-[#8c8c8c] to-white to-12% pr-1.5">
          <span className="text-[13px] font-bold whitespace-nowrap">流器总图.EXB</span>
          <button type="button" aria-label="关闭标签" className="shrink-0">
            <svg viewBox="0 0 11 11" className="h-[11px] w-[11px]" stroke="#858585" strokeWidth="2" aria-hidden="true">
              <path d="m1 1 9 9M10 1l-9 9" />
            </svg>
          </button>
        </div>
      </div>
      <CadDrawing />
    </section>
  );
}

export default function App() {
  return (
    <div className="grid min-h-screen grid-cols-[692fr_596fr] bg-black font-['Open_Sans','Noto_Sans_CJK_SC',sans-serif] text-[15px] leading-5 text-black">
      <IconDefs />
      <WinRar />
      <CadWindow />
    </div>
  );
}
